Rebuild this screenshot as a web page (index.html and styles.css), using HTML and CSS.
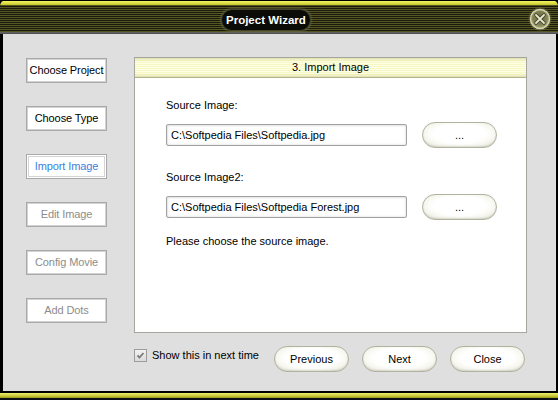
FILE: index.html
```html
<!DOCTYPE html>
<html lang="en">
<head>
    <meta charset="UTF-8">
    <title>Project Wizard</title>
    <link rel="stylesheet" href="styles.css">
</head>
<body>
    <div class="window">
        <!-- title bar -->
        <div class="titlebar">
            <div class="title-pill">Project Wizard</div>
            <div class="close-btn">
                <svg width="24" height="24" viewBox="0 0 24 24">
                    <defs>
                        <radialGradient id="closeFill" cx="50%" cy="45%" r="55%">
                            <stop offset="0" stop-color="#5e5e38"/>
                            <stop offset="0.7" stop-color="#86865a"/>
                            <stop offset="1" stop-color="#b4b488"/>
                        </radialGradient>
                    </defs>
                    <circle cx="12" cy="12" r="11.5" fill="#6e6e48" opacity="0.5"/>
                    <circle cx="12" cy="12" r="9.5" fill="url(#closeFill)" stroke="#d4d4ac" stroke-width="1.5"/>
                    <path d="M8 8 L16 16 M16 8 L8 16" stroke="#3a3a22" stroke-width="3.2" stroke-linecap="round"/>
                    <path d="M8 8 L16 16 M16 8 L8 16" stroke="#e8e8cc" stroke-width="1.8" stroke-linecap="round"/>
                </svg>
            </div>
        </div>

        <div class="content">
            <!-- steps -->
            <div class="steps">
                <div class="step">Choose Project</div>
                <div class="step">Choose Type</div>
                <div class="step current">Import Image</div>
                <div class="step disabled">Edit Image</div>
                <div class="step disabled">Config Movie</div>
                <div class="step disabled">Add Dots</div>
            </div>

            <!-- step panel -->
            <div class="panel">
                <div class="panel-head">3. Import Image</div>
                <div class="panel-body">
                    <div class="field">
                        <div class="field-label">Source Image:</div>
                        <div class="field-row">
                            <div class="path-input">C:\Softpedia Files\Softpedia.jpg</div>
                            <div class="pill-btn">...</div>
                        </div>
                    </div>
                    <div class="field">
                        <div class="field-label">Source Image2:</div>
                        <div class="field-row">
                            <div class="path-input">C:\Softpedia Files\Softpedia Forest.jpg</div>
                            <div class="pill-btn">...</div>
                        </div>
                    </div>
                    <div class="hint">Please choose the source image.</div>
                </div>
            </div>

            <!-- bottom actions -->
            <div class="actions">
                <div class="check-group">
                    <span class="checkbox">
                        <svg width="11" height="11" viewBox="0 0 11 11">
                            <path d="M2.5 5.5 L4.5 7.5 L8.5 3" stroke="#7a7a7a" stroke-width="1.8" fill="none"/>
                        </svg>
                    </span>
                    <span class="check-label">Show this in next time</span>
                </div>
                <div class="buttons">
                    <div class="pill-btn">Previous</div>
                    <div class="pill-btn">Next</div>
                    <div class="pill-btn">Close</div>
                </div>
            </div>
        </div>

        <div class="window-bottom"></div>
    </div>
</body>
</html>
```

FILE: styles.css
```css
body {
    margin: 0;
    background: #000;
    font-family: "Liberation Sans", Arial, sans-serif;
    font-size: 11px;
}
.window {
    width: 558px;
    height: 400px;
    background: #000;
    display: flex;
    flex-direction: column;
}
.titlebar {
    height: 34px;
    box-sizing: border-box;
    display: flex;
    align-items: flex-start;
    padding-left: 221px;
    border-radius: 6px 6px 0 0;
    background:
        linear-gradient(#000 0 1px, #f6f660 1px, #c4c42c 5px) top / 100% 5px no-repeat,
        linear-gradient(#6a6a6a, #474747) bottom / 100% 2px no-repeat,
        repeating-linear-gradient(#1a1a0c 0 1px, #565624 1px 2px);
}
.title-pill {
    margin-top: 9px;
    height: 22px;
    box-sizing: border-box;
    padding: 0 4px;
    border: 1px solid #44442c;
    border-radius: 11px;
    background: #0b0b07;
    box-shadow: 0 0 2px 1px rgba(110, 110, 70, 0.6);
    color: #fff;
    font-weight: bold;
    font-size: 11.5px;
    line-height: 20px;
    text-align: center;
    white-space: nowrap;
}
.close-btn {
    margin-left: auto;
    margin-right: 6px;
    margin-top: 7px;
    width: 24px;
    height: 24px;
}
.content {
    height: 357px;
    margin: 0 2px 0 3px;
    background: #dfdfdf;
    box-sizing: border-box;
    padding: 23px 0 0 23px;
    display: grid;
    grid-template-columns: 81px 393px;
    grid-template-rows: 276px auto;
    column-gap: 27px;
    align-items: start;
}
.steps {
    margin-top: 1px;
    display: flex;
    flex-direction: column;
    gap: 23px;
}
.step {
    height: 25px;
    box-sizing: border-box;
    border: 1px solid #a9a9a9;
    box-shadow: inset 0 0 0 1px #d2d2d2;
    background: #fff;
    color: #000;
    line-height: 23px;
    text-align: center;
    white-space: nowrap;
    letter-spacing: -0.1px;
}
.step.current {
    color: #3a80e0;
    box-shadow: inset 0 0 0 1px #fff, inset 0 0 0 2px #d4d4d4;
}
.step.disabled {
    color: #8c8c8c;
}
.panel {
    height: 276px;
    box-sizing: border-box;
    border: 1px solid #a6a6a0;
    background: #fff;
}
.panel-head {
    height: 20px;
    box-sizing: border-box;
    border-bottom: 1px solid #b4b490;
    line-height: 19px;
    text-align: center;
    color: #000;
    background:
        linear-gradient(rgba(180, 180, 120, 0.35), transparent 4px, transparent 15px, rgba(180, 180, 120, 0.35)),
        repeating-linear-gradient(#f8f8c4 0 1px, #ffffe6 1px 2px);
}
.panel-body {
    padding: 20px 0 0 31px;
}
.field + .field {
    margin-top: 22px;
}
.field-label {
    line-height: 14px;
    margin-bottom: 10px;
}
.field-row {
    height: 26px;
    display: flex;
    align-items: center;
    gap: 15px;
}
.path-input {
    width: 241px;
    height: 22px;
    box-sizing: border-box;
    border: 1px solid #a2a2a2;
    border-radius: 2px;
    box-shadow: inset 1px 1px 2px rgba(0, 0, 0, 0.12), inset -1px -1px 2px rgba(0, 0, 0, 0.08);
    background: #fff;
    padding-left: 4px;
    line-height: 20px;
    white-space: nowrap;
    color: #000;
}
.pill-btn {
    width: 75px;
    height: 26px;
    box-sizing: border-box;
    border: 1px solid #b2b2a0;
    border-radius: 13px;
    background: radial-gradient(ellipse at 50% 45%, #fff 50%, #f6f6ee 72%, #d6d6c8 100%);
    box-shadow: inset 0 -1px 2px rgba(0, 0, 0, 0.12);
    line-height: 24px;
    text-align: center;
    color: #000;
}
.hint {
    margin-top: 14px;
    line-height: 14px;
}
.actions {
    grid-column: 2;
    margin-top: 13px;
    display: flex;
    align-items: flex-start;
}
.check-group {
    width: 140px;
    padding-top: 3px;
    display: flex;
    align-items: center;
    gap: 5px;
}
.checkbox {
    width: 13px;
    height: 13px;
    box-sizing: border-box;
    border: 1px solid #9c9c9c;
    background: linear-gradient(#f2f2f2, #dadada);
    display: flex;
    align-items: center;
    justify-content: center;
}
.check-label {
    line-height: 13px;
    white-space: nowrap;
}
.buttons {
    display: flex;
    gap: 13px;
}
.window-bottom {
    height: 9px;
    background:
        linear-gradient(#000 0 2px, #f0f070 2px, #c8c838 5px, #9c9c20 7px, #0c0c14 7px);
}
```
